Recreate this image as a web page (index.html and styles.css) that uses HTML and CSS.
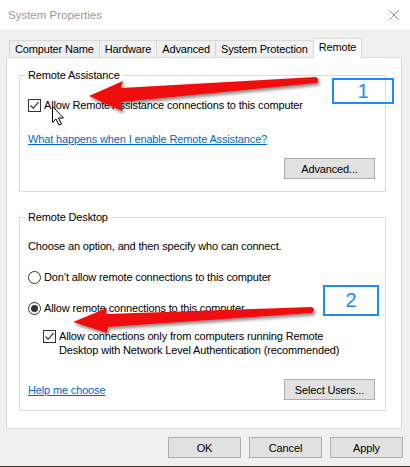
FILE: index.html
```html
<!DOCTYPE html>
<html lang="en">
<head>
    <meta charset="UTF-8">
    <title>System Properties</title>
    <link rel="stylesheet" href="styles.css">
</head>
<body>
<div class="window">
    <!-- Titelleiste -->
    <div class="titlebar">
        <span class="title">System Properties</span>
        <svg class="close" width="10" height="10" viewBox="0 0 10 10">
            <path d="M0.5 0.5 L9.5 9.5 M9.5 0.5 L0.5 9.5" stroke="#8a8a8a" stroke-width="1" fill="none"/>
        </svg>
    </div>

    <div class="dialog">
        <!-- Reiter -->
        <div class="tabs">
            <div class="tab">Computer Name</div>
            <div class="tab">Hardware</div>
            <div class="tab">Advanced</div>
            <div class="tab">System Protection</div>
            <div class="tab active">Remote</div>
        </div>

        <div class="panel">
            <fieldset class="group">
                <legend>Remote Assistance</legend>
                <div class="check-row">
                    <span class="checkbox">
                        <svg width="11" height="11" viewBox="0 0 11 11"><path d="M1.5 5.5 L4.2 8.2 L9.6 2.2" stroke="#333" stroke-width="1.2" fill="none"/></svg>
                    </span>
                    <span>Allow Remote Assistance connections to this computer</span>
                </div>
                <div class="link-row"><a href="#" class="link">What happens when I enable Remote Assistance?</a></div>
                <div class="button-row"><button class="btn wide">Advanced...</button></div>
            </fieldset>

            <fieldset class="group desktop-group">
                <legend>Remote Desktop</legend>
                <div class="hint">Choose an option, and then specify who can connect.</div>
                <div class="radio-row first">
                    <span class="radio"></span>
                    <span>Don’t allow remote connections to this computer</span>
                </div>
                <div class="radio-row">
                    <span class="radio selected"></span>
                    <span>Allow remote connections to this computer</span>
                </div>
                <div class="check-row nested">
                    <span class="checkbox">
                        <svg width="11" height="11" viewBox="0 0 11 11"><path d="M1.5 5.5 L4.2 8.2 L9.6 2.2" stroke="#333" stroke-width="1.2" fill="none"/></svg>
                    </span>
                    <span>Allow connections only from computers running Remote<br>Desktop with Network Level Authentication (recommended)</span>
                </div>
                <div class="button-row split">
                    <a href="#" class="link">Help me choose</a>
                    <button class="btn wide">Select Users...</button>
                </div>
            </fieldset>
        </div>

        <div class="footer">
            <button class="btn">OK</button>
            <button class="btn">Cancel</button>
            <button class="btn">Apply</button>
        </div>
    </div>
    <div class="desktop"></div>

    <!-- Markierungen aus dem Screenshot -->
    <svg class="marks" width="410" height="467" viewBox="0 0 410 467">
        <defs>
            <filter id="shadow" x="-10%" y="-50%" width="120%" height="200%">
                <feDropShadow dx="1.5" dy="2.5" stdDeviation="1.5" flood-color="#000" flood-opacity="0.45"/>
            </filter>
        </defs>
        <path filter="url(#shadow)" fill="#f01010"
              d="M89 96 L123 81 L121 88 L316 77 Q320 79 317 83 L122 102 L122 111 Z"/>
        <path filter="url(#shadow)" fill="#f01010"
              d="M73 322 L107 308 L106 314 L312 307 Q316 309 312 313 L108 327 L107 333 Z"/>
        <path fill="#fff" stroke="#000" stroke-width="1" stroke-linejoin="round"
              d="M52.5 106.5 L52.5 122.5 L56 119 L59 125 L61.5 124 L58.5 118 L63.5 118 Z"/>
    </svg>
    <div class="badge one">1</div>
    <div class="badge two">2</div>
</div>
</body>
</html>
```

FILE: styles.css
```css
/* Grundlayout */
body {
    margin: 0;
    font-family: "Liberation Sans", Arial, sans-serif;
    font-size: 11px;
    letter-spacing: -0.15px;
    color: #000;
    background-color: #f0f0f0;
}

.window {
    position: relative;
    width: 410px;
    height: 467px;
    overflow: hidden;
    display: flex;
    flex-direction: column;
}

/* Titelleiste */
.titlebar {
    height: 30px;
    flex: none;
    background-color: #fff;
    display: flex;
    align-items: center;
    justify-content: space-between;
    padding: 0 11px 0 8px;
    box-sizing: border-box;
}

.title {
    color: #9a9a9a;
    font-size: 11.5px;
    letter-spacing: 0;
}

.dialog {
    height: 436px;
    flex: none;
    display: flex;
    flex-direction: column;
    background-color: #f0f0f0;
}

/* Reiter */
.tabs {
    display: flex;
    align-items: flex-end;
    height: 19px;
    margin: 8px 0 0 9px;
}

.tab {
    height: 17px;
    box-sizing: border-box;
    line-height: 16px;
    padding: 0 5px;
    border: 1px solid #d9d9d9;
    border-bottom: none;
    background-color: #f0f0f0;
}

    .tab + .tab {
        margin-left: -1px;
    }

    .tab.active {
        height: 20px;
        line-height: 16px;
        margin-bottom: -1px;
        background-color: #fff;
        position: relative;
        z-index: 1;
    }

.panel {
    height: 372px;
    box-sizing: border-box;
    margin: 0 8px 0 6px;
    padding: 0 15px 0 12px;
    background-color: #fff;
    border: 1px solid #d9d9d9;
}

/* Gruppen */
.group {
    margin: 10px 0 0 0;
    padding: 0 10px 12px 8px;
    border: 1px solid #dcdcdc;
}

    .group legend {
        padding: 0 3px;
        margin-left: -3px;
        line-height: 14px;
    }

.desktop-group {
    margin-top: 18px;
    padding-bottom: 10px;
}

.check-row {
    display: flex;
    align-items: flex-start;
    line-height: 14px;
    margin-top: 16px;
}

    .check-row.nested {
        margin-top: 14px;
        padding-left: 15px;
    }

.checkbox {
    width: 13px;
    height: 13px;
    box-sizing: border-box;
    border: 1px solid #333;
    background-color: #fff;
    margin: 1px 3px 0 0;
    flex: none;
    display: flex;
    align-items: center;
    justify-content: center;
}

    .checkbox svg {
        display: block;
    }

.link-row {
    margin-top: 20px;
    line-height: 14px;
}

.link {
    color: #0066cc;
    text-decoration: underline;
}

.hint {
    margin-top: 15px;
    line-height: 14px;
}

.radio-row {
    display: flex;
    align-items: center;
    line-height: 14px;
    margin-top: 17px;
}

.radio {
    width: 13px;
    height: 13px;
    box-sizing: border-box;
    border: 1px solid #333;
    border-radius: 50%;
    background-color: #fff;
    margin-right: 3px;
    flex: none;
    display: flex;
    align-items: center;
    justify-content: center;
}

    .radio.selected::after {
        content: "";
        width: 7px;
        height: 7px;
        border-radius: 50%;
        background-color: #333;
    }

/* Schaltflächen */
.button-row {
    display: flex;
    justify-content: flex-end;
    align-items: center;
    margin-top: 12px;
}

    .button-row.split {
        justify-content: space-between;
        margin-top: 22px;
    }

.btn {
    width: 73px;
    height: 21px;
    box-sizing: border-box;
    padding: 0;
    font-family: inherit;
    font-size: 11px;
    letter-spacing: -0.15px;
    color: #000;
    background-color: #e1e1e1;
    border: 1px solid #adadad;
}

    .btn.wide {
        width: 91px;
    }

.footer {
    display: flex;
    justify-content: flex-end;
    gap: 8px;
    margin-top: 8px;
    padding-right: 7px;
}

.desktop {
    height: 1px;
    flex: none;
    background-color: #3b3631;
}

/* Markierungen */
.marks {
    position: absolute;
    top: 0;
    left: 0;
    pointer-events: none;
}

.badge {
    position: absolute;
    box-sizing: border-box;
    border: 2px solid #1a8cff;
    color: #1a8cff;
    font-size: 20px;
    letter-spacing: 0;
    display: flex;
    align-items: center;
    justify-content: center;
}

    .badge.one {
        left: 332px;
        top: 78px;
        width: 62px;
        height: 26px;
    }

    .badge.two {
        left: 323px;
        top: 285px;
        width: 56px;
        height: 31px;
    }
```
